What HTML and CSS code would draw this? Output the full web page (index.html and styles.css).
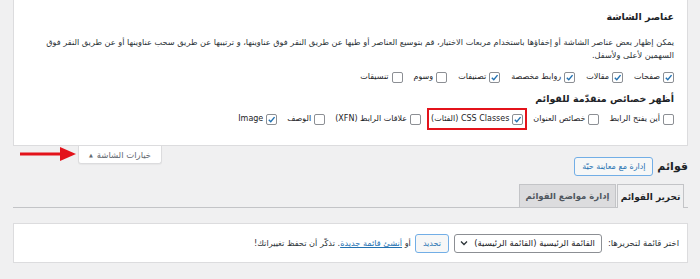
FILE: index.html
```html
<!DOCTYPE html>
<html lang="ar" dir="rtl">
<head>
<meta charset="utf-8">
<link rel="stylesheet" href="styles.css">
</head>
<body>
<div class="wrap">
  <div class="screen-panel">
    <h5 class="panel-title">عناصر الشاشة</h5>
    <p class="panel-desc">يمكن إظهار بعض عناصر الشاشة أو إخفاؤها باستخدام مربعات الاختيار، قم بتوسيع العناصر أو طيها عن طريق النقر فوق عناوينها، و ترتيبها عن طريق سحب عناوينها أو عن طريق النقر فوق<br>السهمين لأعلى ولأسفل.</p>
    <div class="check-row">
      <label class="opt"><span class="cb"><svg viewBox="0 0 10 10"><path d="M2 5.2 L4.2 7.4 L8.4 2.4"/></svg></span>صفحات</label>
      <label class="opt"><span class="cb"><svg viewBox="0 0 10 10"><path d="M2 5.2 L4.2 7.4 L8.4 2.4"/></svg></span>مقالات</label>
      <label class="opt"><span class="cb"><svg viewBox="0 0 10 10"><path d="M2 5.2 L4.2 7.4 L8.4 2.4"/></svg></span>روابط مخصصة</label>
      <label class="opt"><span class="cb"><svg viewBox="0 0 10 10"><path d="M2 5.2 L4.2 7.4 L8.4 2.4"/></svg></span>تصنيفات</label>
      <label class="opt"><span class="cb"></span>وسوم</label>
      <label class="opt"><span class="cb"></span>تنسيقات</label>
    </div>
    <h5 class="panel-title second">أظهر خصائص متقدّمة للقوائم</h5>
    <div class="check-row second-row">
      <label class="opt"><span class="cb"></span>أين يفتح الرابط</label>
      <label class="opt"><span class="cb"></span>خصائص العنوان</label>
      <label class="opt highlight"><span class="cb"><svg viewBox="0 0 10 10"><path d="M2 5.2 L4.2 7.4 L8.4 2.4"/></svg></span>CSS Classes (الفئات)</label>
      <label class="opt"><span class="cb"></span>علاقات الرابط (XFN)</label>
      <label class="opt"><span class="cb"></span>الوصف</label>
      <label class="opt"><span class="cb"><svg viewBox="0 0 10 10"><path d="M2 5.2 L4.2 7.4 L8.4 2.4"/></svg></span>Image</label>
    </div>
  </div>

  <div class="header-row">
    <div class="title-group">
      <h1 class="page-title">قوائم</h1>
      <a class="btn-outline live">إدارة مع معاينة حيّة</a>
    </div>
    <div class="meta-links">
      <svg class="red-arrow" viewBox="0 0 56 16" width="56" height="16"><path d="M0 8 H42" stroke="#e3131b" stroke-width="3"/><polygon points="40,1 56,8 40,15" fill="#e3131b"/></svg>
      <div class="screen-tab"><span class="tab-arrow">▲</span>خيارات الشاشة</div>
    </div>
  </div>

  <div class="nav-tabs">
    <span class="nav-tab active">تحرير القوائم</span>
    <span class="nav-tab second-tab">إدارة مواضع القوائم</span>
  </div>

  <div class="manage-box">
    <span class="manage-label">اختر قائمة لتحريرها:</span>
    <span class="select-box"><span class="select-text">القائمة الرئيسية (القائمة الرئيسية)</span><svg class="chev" viewBox="0 0 8 6" width="8" height="6"><path d="M1 1.5 L4 4.5 L7 1.5"/></svg></span>
    <a class="btn-outline small">تحديد</a>
    <span class="manage-tail">أو <a class="link">أنشئ قائمة جديدة</a>. تذكّر أن تحفظ تغييراتك!</span>
  </div>
</div>
</body>
</html>
```
FILE: styles.css
```css
html, body {
  margin: 0;
  padding: 0;
}
body {
  background: #f0f0f1;
  font-family: "DejaVu Sans", sans-serif;
  color: #1d2327;
  font-size: 9px;
}
.wrap {
  padding: 0 12px 0 13px;
}
.screen-panel {
  background: #fff;
  border: 1px solid #dcdcde;
  border-top: none;
  padding: 10px 13px 0;
  height: 135px;
}
.panel-title {
  margin: 0;
  font-size: 9.5px;
  line-height: 14px;
  font-weight: bold;
}
.panel-title.second {
  margin-top: 8px;
}
.panel-desc {
  margin: 12px 0 0;
  line-height: 13px;
  font-size: 8.2px;
  color: #2c3338;
  white-space: nowrap;
}
.check-row {
  display: flex;
  align-items: center;
  height: 14px;
  margin-top: 8px;
}
.check-row.second-row {
  margin-top: 6px;
}
.opt {
  display: flex;
  align-items: center;
  margin-left: 11px;
  white-space: nowrap;
  line-height: 14px;
  font-size: 8px;
}
.second-row .opt {
  margin-left: 10px;
}
.cb {
  width: 9px;
  height: 9px;
  border: 1px solid #8c8f94;
  border-radius: 2px;
  background: #fff;
  margin-left: 3px;
  display: inline-flex;
  flex-shrink: 0;
}
.cb svg {
  width: 9px;
  height: 9px;
}
.cb path {
  fill: none;
  stroke: #2271b1;
  stroke-width: 1.6;
}
.second-row .highlight {
  outline: 2px solid #e3131b;
  padding: 2px 2px;
  margin: -2px -2px;
  margin-left: 8px;
}
.header-row {
  display: flex;
  justify-content: space-between;
  align-items: flex-start;
}
.title-group {
  display: flex;
  align-items: center;
  margin-top: 11px;
}
.page-title {
  margin: 0 0 0 4px;
  font-size: 11px;
  font-weight: bold;
  line-height: 19px;
}
.btn-outline {
  display: inline-flex;
  align-items: center;
  justify-content: center;
  box-sizing: border-box;
  height: 19px;
  padding: 0 6px;
  border: 1px solid #2271b1;
  border-radius: 3px;
  background: #f6f7f7;
  color: #2271b1;
  font-size: 8px;
  white-space: nowrap;
}
.btn-outline.live {
  width: 79px;
  border-color: #72aee6;
}
.meta-links {
  display: flex;
  direction: ltr;
  align-items: flex-start;
  margin-left: 7px;
}
.red-arrow {
  margin-right: 2px;
}
.screen-tab {
  display: flex;
  align-items: center;
  height: 18px;
  width: 84px;
  box-sizing: border-box;
  justify-content: center;
  background: #fff;
  border: 1px solid #dcdcde;
  border-top: none;
  border-radius: 0 0 3px 3px;
  box-shadow: 0 1px 1px rgba(0,0,0,0.04);
  color: #646970;
  font-size: 8.5px;
  white-space: nowrap;
}
.tab-arrow {
  font-size: 5px;
  margin-right: 4px;
  color: #646970;
}
.nav-tabs {
  display: flex;
  margin-top: 7px;
  padding-right: 4px;
  border-bottom: 1px solid #c3c4c7;
  height: 24px;
  align-items: flex-end;
}
.nav-tab {
  display: flex;
  align-items: center;
  justify-content: center;
  box-sizing: border-box;
  width: 67px;
  height: 23px;
  border: 1px solid #c3c4c7;
  border-bottom: none;
  background: #dcdcde;
  color: #50575e;
  font-weight: bold;
  font-size: 9px;
  margin-left: 1px;
  white-space: nowrap;
}
.nav-tab.second-tab {
  width: 97px;
  font-size: 8.5px;
}
.nav-tab.active {
  background: #f0f0f1;
  color: #1d2327;
  height: 24px;
  margin-bottom: -1px;
}
.manage-box {
  margin-top: 15px;
  background: #fff;
  border: 1px solid #dcdcde;
  height: 38px;
  display: flex;
  align-items: center;
  padding: 0 8px;
  white-space: nowrap;
}
.manage-label {
  margin-left: 6px;
  font-size: 8.5px;
  color: #2c3338;
}
.select-box {
  display: inline-flex;
  align-items: center;
  justify-content: space-between;
  box-sizing: border-box;
  width: 148px;
  height: 19px;
  border: 1px solid #8c8f94;
  border-radius: 3px;
  padding: 0 6px 0 5px;
  font-size: 8.5px;
  margin-left: 5px;
}
.chev path {
  fill: none;
  stroke: #2c3338;
  stroke-width: 1.3;
}
.btn-outline.small {
  width: 34px;
  padding: 0;
  border-color: #72aee6;
  color: #2271b1;
  margin-left: 4px;
}
.manage-tail {
  font-size: 8.2px;
  color: #2c3338;
}
.link {
  color: #2271b1;
  text-decoration: underline;
}
```
